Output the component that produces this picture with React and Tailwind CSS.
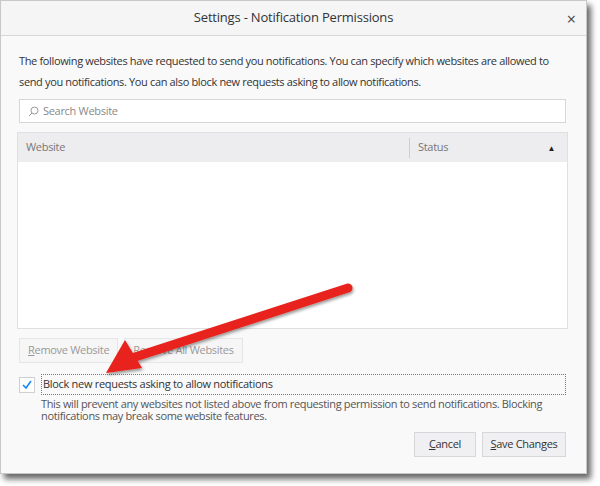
export default function App() {
  const f = { fontFamily: '"Open Sans","Liberation Sans",sans-serif' };
  return (
    <div className="w-[600px] h-[486px] bg-white relative overflow-hidden" style={f}>
      <div className="absolute left-0 top-0 w-[587px] h-[474px] bg-[#f9f9fa] border border-[#c8c8c8] shadow-[4px_5px_6px_rgba(0,0,0,0.6)] flex flex-col">
        <div className="h-[35px] flex items-center justify-center relative border-b border-[#d7d7db] bg-[#f5f5f6]">
          <span className="text-[13px] text-[#333] tracking-[-0.2px]">Settings - Notification Permissions</span>
          <span className="absolute right-[10px] top-[6px] text-[16px] text-[#444]">×</span>
        </div>
        <div className="pl-[18px] pr-[20px] pt-[14px] flex flex-col">
          <p className="text-[11px] leading-[21px] text-[#333] tracking-[-0.35px]">The following websites have requested to send you notifications. You can specify which websites are allowed to send you notifications. You can also block new requests asking to allow notifications.</p>
          <div className="mt-[7px] h-[24px] bg-white border border-[#d7d7db] flex items-center px-[8px] gap-[4px]">
            <svg width="11" height="11" viewBox="0 0 11 11" fill="none" stroke="#999" strokeWidth="1"><circle cx="6.5" cy="4.5" r="3.5"/><path d="M4 7 L1 10"/></svg>
            <span className="text-[11px] text-[#888] tracking-[-0.3px]">Search Website</span>
          </div>
          <div className="mt-[9px] -mx-[2px] h-[197px] border border-[#e0e0e2] bg-white flex flex-col">
            <div className="h-[29px] bg-[#ededf0] flex items-center text-[11px] text-[#777] tracking-[-0.3px]">
              <div className="flex-1 px-[8px]">Website</div>
              <div className="w-[158px] h-[20px] border-l border-[#cfcfd3] flex items-center justify-between px-[8px]">
                <span>Status</span><span className="text-[8px] text-[#222] mr-[4px]">▲</span>
              </div>
            </div>
          </div>
          <div className="mt-[9px] flex gap-[6px] text-[11px] text-[#999] tracking-[-0.3px]">
            <div className="h-[25px] px-[8px] border border-[#e6e6e8] bg-[#f6f6f7] flex items-center"><u>R</u>emove Website</div>
            <div className="h-[25px] px-[8px] border border-[#e6e6e8] bg-[#f6f6f7] flex items-center">Remove All Websites</div>
          </div>
          <div className="mt-[11px] flex items-center gap-[6px]">
            <div className="w-[16px] h-[16px] bg-white border border-[#d0d0d4] flex items-center justify-center">
              <svg width="10" height="9" viewBox="0 0 10 9" fill="none" stroke="#0a84ff" strokeWidth="1.5"><path d="M1 5 L4 8 L9 1"/></svg>
            </div>
            <div className="flex-1 h-[21px] border border-dotted border-[#777] flex items-center px-[1px] text-[11px] text-[#333] tracking-[-0.3px]">Block new requests asking to allow notifications</div>
          </div>
          <p className="ml-[22px] mt-[3px] text-[11px] leading-[12px] text-[#555] tracking-[-0.35px]">This will prevent any websites not listed above from requesting permission to send notifications. Blocking notifications may break some website features.</p>
          <div className="mt-[10px] flex justify-end gap-[6px] text-[11px] text-[#333] tracking-[-0.3px]">
            <div className="h-[25px] w-[62px] border border-[#d7d7db] bg-[#f0f0f2] flex items-center justify-center"><span><u>C</u>ancel</span></div>
            <div className="h-[25px] w-[84px] border border-[#d7d7db] bg-[#f0f0f2] flex items-center justify-center"><span><u>S</u>ave Changes</span></div>
          </div>
        </div>
      </div>
      <svg className="absolute left-0 top-0" width="600" height="486" viewBox="0 0 600 486">
        <defs>
          <filter id="s" x="-20%" y="-20%" width="140%" height="140%"><feDropShadow dx="1" dy="2" stdDeviation="1.5" floodOpacity="0.4"/></filter>
        </defs>
        <g filter="url(#s)">
          <path d="M348 288 L132 358" stroke="#e8231a" strokeWidth="9" strokeLinecap="round"/>
          <path d="M106 373 L125 340 L142 368 Z" fill="#e8231a"/>
        </g>
      </svg>
    </div>
  );
}
